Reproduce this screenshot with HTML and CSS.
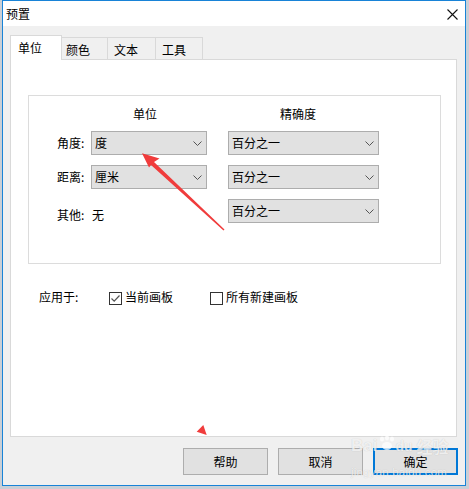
FILE: index.html
```html
<!DOCTYPE html>
<html lang="zh-CN">
<head>
<meta charset="utf-8">
<title>预置</title>
<link rel="stylesheet" href="styles.css">
</head>
<body>
<div class="window">
  <div class="titlebar">
    <span class="title">预置</span>
    <svg class="close" width="11" height="11" viewBox="0 0 11 11"><path d="M0.5 0.5 L10.5 10.5 M10.5 0.5 L0.5 10.5" stroke="#111" stroke-width="1.1" fill="none"/></svg>
  </div>
  <div class="body">
    <div class="tabs">
      <div class="tab active">单位</div>
      <div class="tab t2">颜色</div>
      <div class="tab t3">文本</div>
      <div class="tab t4">工具</div>
    </div>
    <div class="panel">
      <div class="group">
        <div class="grid">
          <div></div>
          <div class="hdr h1">单位</div>
          <div class="hdr h2">精确度</div>

          <div class="lbl">角度:</div>
          <div class="select s1"><span>度</span><svg class="chev" width="9" height="5" viewBox="0 0 9 5"><path d="M0.5 0.5 L4.5 4.5 L8.5 0.5" stroke="#555" fill="none"/></svg></div>
          <div class="select s2"><span>百分之一</span><svg class="chev" width="9" height="5" viewBox="0 0 9 5"><path d="M0.5 0.5 L4.5 4.5 L8.5 0.5" stroke="#555" fill="none"/></svg></div>

          <div class="lbl">距离:</div>
          <div class="select s1"><span>厘米</span><svg class="chev" width="9" height="5" viewBox="0 0 9 5"><path d="M0.5 0.5 L4.5 4.5 L8.5 0.5" stroke="#555" fill="none"/></svg></div>
          <div class="select s2"><span>百分之一</span><svg class="chev" width="9" height="5" viewBox="0 0 9 5"><path d="M0.5 0.5 L4.5 4.5 L8.5 0.5" stroke="#555" fill="none"/></svg></div>

          <div class="lbl low">其他:</div>
          <div class="val low">无</div>
          <div class="select s2"><span>百分之一</span><svg class="chev" width="9" height="5" viewBox="0 0 9 5"><path d="M0.5 0.5 L4.5 4.5 L8.5 0.5" stroke="#555" fill="none"/></svg></div>
        </div>
      </div>
      <div class="apply">
        <span class="apply-lbl">应用于:</span>
        <span class="check checked"><svg width="11" height="11" viewBox="0 0 11 11"><path d="M1.5 5.5 L4.2 8.2 L9.5 2.5" stroke="#555" stroke-width="1.2" fill="none"/></svg></span>
        <span class="check-text">当前画板</span>
        <span class="check second"></span>
        <span class="check-text">所有新建画板</span>
      </div>
    </div>
    <div class="buttons">
      <div class="btn">帮助</div>
      <div class="btn">取消</div>
      <div class="btn primary">确定</div>
    </div>
  </div>
</div>

<svg class="annot" width="469" height="489" viewBox="0 0 469 489">
  <path d="M142 153.3 L159.5 158.5 L154 162 L224.5 229.5 L223.5 230.5 L151 165 L149 167.5 Z" fill="#f03c3c"/>
  <path d="M196.7 431.7 L203.3 425 L206.7 435 Z" fill="#f03c3c"/>
</svg>

<div class="watermark">
  <div class="wm-top">
    <span class="wm-bai">Bai</span>
    <svg class="wm-paw" width="18" height="15" viewBox="0 0 18 15">
      <ellipse cx="4" cy="3" rx="2" ry="2.6" fill="rgba(255,255,255,0.75)"/>
      <ellipse cx="9" cy="2" rx="2" ry="2.4" fill="rgba(255,255,255,0.75)"/>
      <ellipse cx="14" cy="3" rx="2" ry="2.6" fill="rgba(255,255,255,0.75)"/>
      <ellipse cx="9" cy="10" rx="5" ry="4" fill="rgba(255,255,255,0.75)"/>
    </svg>
    <span class="wm-du">du</span>
    <span class="wm-cn">经验</span>
  </div>
  <div class="wm-url">jingyan.baidu.com</div>
</div>
</body>
</html>
```

FILE: styles.css
```css
html, body {
  margin: 0;
  padding: 0;
}
body {
  width: 469px;
  height: 489px;
  background: #c9cfd6;
  font-family: "Noto Sans CJK SC", "Noto Sans", sans-serif;
  font-size: 12px;
  line-height: 16px;
  color: #000;
  overflow: hidden;
  position: relative;
}
.window {
  box-sizing: border-box;
  width: 464px;
  height: 486px;
  margin-left: 2px;
  border: 1px solid #1883d7;
  background: #f0f0f0;
  display: flex;
  flex-direction: column;
}
.titlebar {
  height: 25px;
  background: #fff;
  display: flex;
  align-items: center;
  padding-left: 3px;
}
.title {
  line-height: 16px;
}
.close {
  margin-left: auto;
  margin-right: 7px;
  margin-top: 1px;
}
.body {
  flex: 1;
  display: flex;
  flex-direction: column;
  padding: 9px 7px 0 7px;
}
.tabs {
  display: flex;
  align-items: flex-end;
  height: 24px;
}
.tab {
  box-sizing: border-box;
  height: 22px;
  line-height: 21px;
  padding-top: 1px;
  border-top: 1px solid #d9d9d9;
  border-right: 1px solid #d9d9d9;
  background: #f0f0f0;
}
.tab.active {
  height: 25px;
  width: 52px;
  margin-bottom: -1px;
  padding-left: 7px;
  padding-top: 0;
  line-height: 24px;
  border-left: 1px solid #d9d9d9;
  background: #fff;
  position: relative;
  z-index: 1;
}
.tab.t2 { width: 46px; padding-left: 4px; }
.tab.t3 { width: 48px; padding-left: 6px; }
.tab.t4 { width: 47px; padding-left: 6px; }

.panel {
  box-sizing: border-box;
  height: 378px;
  margin-right: 1px;
  border: 1px solid #d9d9d9;
  background: #fff;
  display: flex;
  flex-direction: column;
}
.group {
  margin: 35px 15px 0 17px;
  border: 1px solid #dcdcdc;
  padding: 10px 0 40px 28px;
}
.grid {
  display: grid;
  grid-template-columns: 34px 137px 151px;
  grid-template-rows: 15px 24px 24px 24px;
  row-gap: 10px;
}
.hdr {
  line-height: 15px;
}
.h1 { padding-left: 42px; }
.h2 { padding-left: 52px; }
.lbl, .val {
  align-self: center;
  white-space: nowrap;
}
.lbl.low, .val.low {
  align-self: start;
  padding-top: 8px;
}
.val {
  padding-left: 1px;
}
.select {
  box-sizing: border-box;
  height: 24px;
  border: 1px solid #adadad;
  background: #e1e1e1;
  display: flex;
  align-items: center;
  padding-left: 3px;
}
.s1 { width: 116px; }
.s2 { width: 151px; }
.chev {
  margin-left: auto;
  margin-right: 4px;
  margin-top: 1px;
}
.apply {
  display: flex;
  align-items: center;
  margin-top: 25px;
  padding-left: 28px;
  height: 16px;
}
.apply-lbl {
  width: 70px;
}
.check {
  box-sizing: border-box;
  width: 13px;
  height: 13px;
  border: 1px solid #333;
  background: #fff;
  margin-right: 3px;
  margin-top: 2px;
  display: flex;
  align-items: center;
  justify-content: center;
}
.check.second {
  margin-left: 37px;
}
.buttons {
  display: flex;
  justify-content: flex-end;
  gap: 10px;
  margin-top: 11px;
}
.btn {
  box-sizing: border-box;
  width: 85px;
  height: 27px;
  border: 1px solid #adadad;
  background: #e1e1e1;
  display: flex;
  align-items: center;
  justify-content: center;
}
.btn.primary {
  border: 2px solid #0078d7;
}
.annot {
  position: absolute;
  left: 0;
  top: 0;
  pointer-events: none;
}
.watermark {
  position: absolute;
  left: 351px;
  top: 436px;
  pointer-events: none;
  white-space: nowrap;
  color: rgba(255, 255, 255, 0.75);
  text-shadow: 0 0 1px rgba(0, 0, 0, 0.2);
}
.wm-top {
  display: flex;
  align-items: flex-end;
  height: 20px;
  font-family: "Liberation Sans", sans-serif;
  font-size: 17px;
  line-height: 20px;
  font-weight: bold;
}
.wm-paw {
  flex: none;
  margin: 0 0 5px 1px;
}
.wm-du {
  font-size: 14px;
  margin-left: -1px;
}
.wm-cn {
  font-family: "Noto Sans CJK SC", sans-serif;
  font-size: 16px;
  margin-left: 4px;
}
.wm-url {
  font-family: "Liberation Sans", sans-serif;
  font-size: 11.5px;
  line-height: 14px;
  margin-top: 9px;
  letter-spacing: 0.2px;
}
```
